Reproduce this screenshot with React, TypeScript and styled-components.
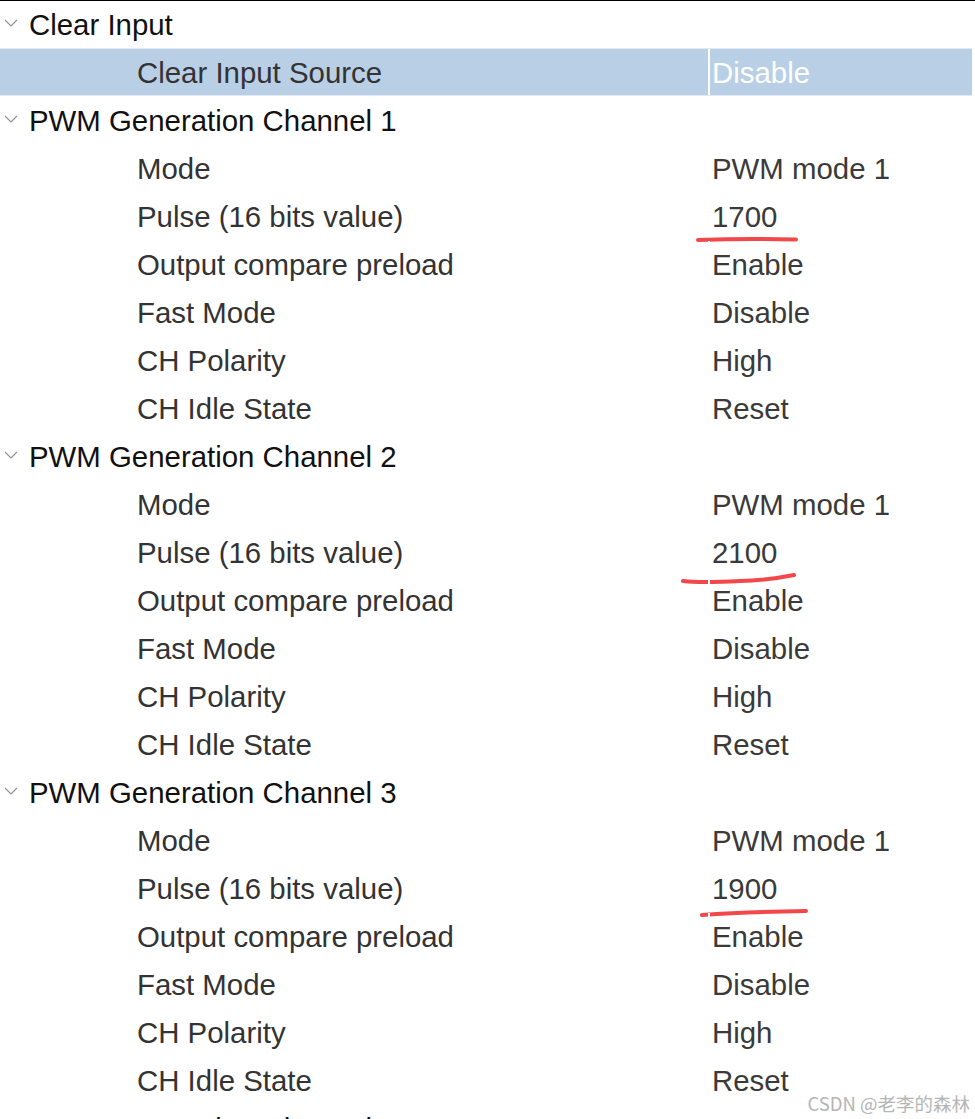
import React from 'react';
import styled, { createGlobalStyle } from 'styled-components';

type Mark = { d: string; left: number; top: number; width: number; height: number };

type Param = { label: string; value: string; selected?: boolean; mark?: Mark };

type Group = { title: string; params: Param[] };

const channel = (pulse: string, mark: Mark): Param[] => [
  { label: 'Mode', value: 'PWM mode 1' },
  { label: 'Pulse (16 bits value)', value: pulse, mark },
  { label: 'Output compare preload', value: 'Enable' },
  { label: 'Fast Mode', value: 'Disable' },
  { label: 'CH Polarity', value: 'High' },
  { label: 'CH Idle State', value: 'Reset' },
];

const groups: Group[] = [
  {
    title: 'Clear Input',
    params: [{ label: 'Clear Input Source', value: 'Disable', selected: true }],
  },
  {
    title: 'PWM Generation Channel 1',
    params: channel('1700', { d: 'M3 3 Q50 1.5 101 2.5', left: -15, top: 44, width: 106, height: 6 }),
  },
  {
    title: 'PWM Generation Channel 2',
    params: channel('2100', { d: 'M3 9 Q20 11 60 9 Q90 8 114 3', left: -30, top: 43, width: 118, height: 13 }),
  },
  {
    title: 'PWM Generation Channel 3',
    params: channel('1900', { d: 'M3 6 Q50 3 107 2', left: -11, top: 44, width: 111, height: 9 }),
  },
  { title: 'PWM Generation Channel 4', params: [] },
];

const App = () => {
  return (
    <>
      <GlobalStyle />
      <Page>
        <Tree>
          {groups.map((g) => (
            <React.Fragment key={g.title}>
              <HeaderRow>
                <Chevron width="14" height="8" viewBox="0 0 14 8">
                  <polyline points="1,1 7,7 13,1" />
                </Chevron>
                <HeaderTitle>{g.title}</HeaderTitle>
              </HeaderRow>
              {g.params.map((p) => (
                <ParamRow key={g.title + p.label} $selected={p.selected}>
                  <LabelCell>{p.label}</LabelCell>
                  <ValueCell $selected={p.selected}>
                    {p.value}
                    {p.mark && (
                      <Underline
                        width={p.mark.width}
                        height={p.mark.height}
                        viewBox={`0 0 ${p.mark.width} ${p.mark.height}`}
                        style={{ left: p.mark.left, top: p.mark.top }}
                      >
                        <path d={p.mark.d} />
                      </Underline>
                    )}
                  </ValueCell>
                </ParamRow>
              ))}
            </React.Fragment>
          ))}
        </Tree>
        <Watermark>CSDN @老李的森林</Watermark>
      </Page>
    </>
  );
};

export default App;

const GlobalStyle = createGlobalStyle`
  html, body {
    margin: 0;
    padding: 0;
    background: #fff;
    overflow: hidden;
  }
  body {
    font-family: "Liberation Sans", Arial, sans-serif;
  }
`;

const Page = styled.div`
  position: relative;
  width: 975px;
  height: 1119px;
  overflow: hidden;
  box-shadow: inset 0 1px 0 #000;
`;

const Tree = styled.div`
  width: 972px;
  display: flex;
  flex-direction: column;
  font-size: 29.4px;
`;

const HeaderRow = styled.div`
  height: 48px;
  box-sizing: border-box;
  display: flex;
  align-items: center;
  padding: 1px 0 0 4px;
`;

const HeaderTitle = styled.div`
  line-height: 47px;
  color: #111;
  white-space: nowrap;
`;

const Chevron = styled.svg`
  flex: none;
  margin: -4px 11px 0 0;
  fill: none;
  stroke: #8f8f8f;
  stroke-width: 1.1;
`;

const ParamRow = styled.div<{ $selected?: boolean }>`
  height: 48px;
  box-sizing: border-box;
  display: grid;
  grid-template-columns: 708px 1fr;
  line-height: 45px;
  background: ${(p) => (p.$selected ? '#b9cfe6' : 'transparent')};
  border-top: 1px solid ${(p) => (p.$selected ? '#dfe9f4' : 'transparent')};
  border-bottom: 1px solid ${(p) => (p.$selected ? '#dfe9f4' : 'transparent')};
`;

const LabelCell = styled.div`
  padding: 1px 0 0 137px;
  color: #333;
  white-space: nowrap;
`;

const ValueCell = styled.div<{ $selected?: boolean }>`
  position: relative;
  padding: 1px 0 0 2px;
  border-left: 2px solid #fff;
  color: ${(p) => (p.$selected ? '#fff' : '#3a3a3a')};
  white-space: nowrap;
`;

const Underline = styled.svg`
  position: absolute;
  overflow: visible;
  fill: none;
  stroke: #f2474b;
  stroke-width: 4;
  stroke-linecap: round;
`;

const Watermark = styled.div`
  position: absolute;
  right: 5px;
  bottom: 6px;
  font-family: "Noto Sans CJK SC", sans-serif;
  font-size: 18.5px;
  line-height: 20px;
  color: #b5b5b5;
`;
